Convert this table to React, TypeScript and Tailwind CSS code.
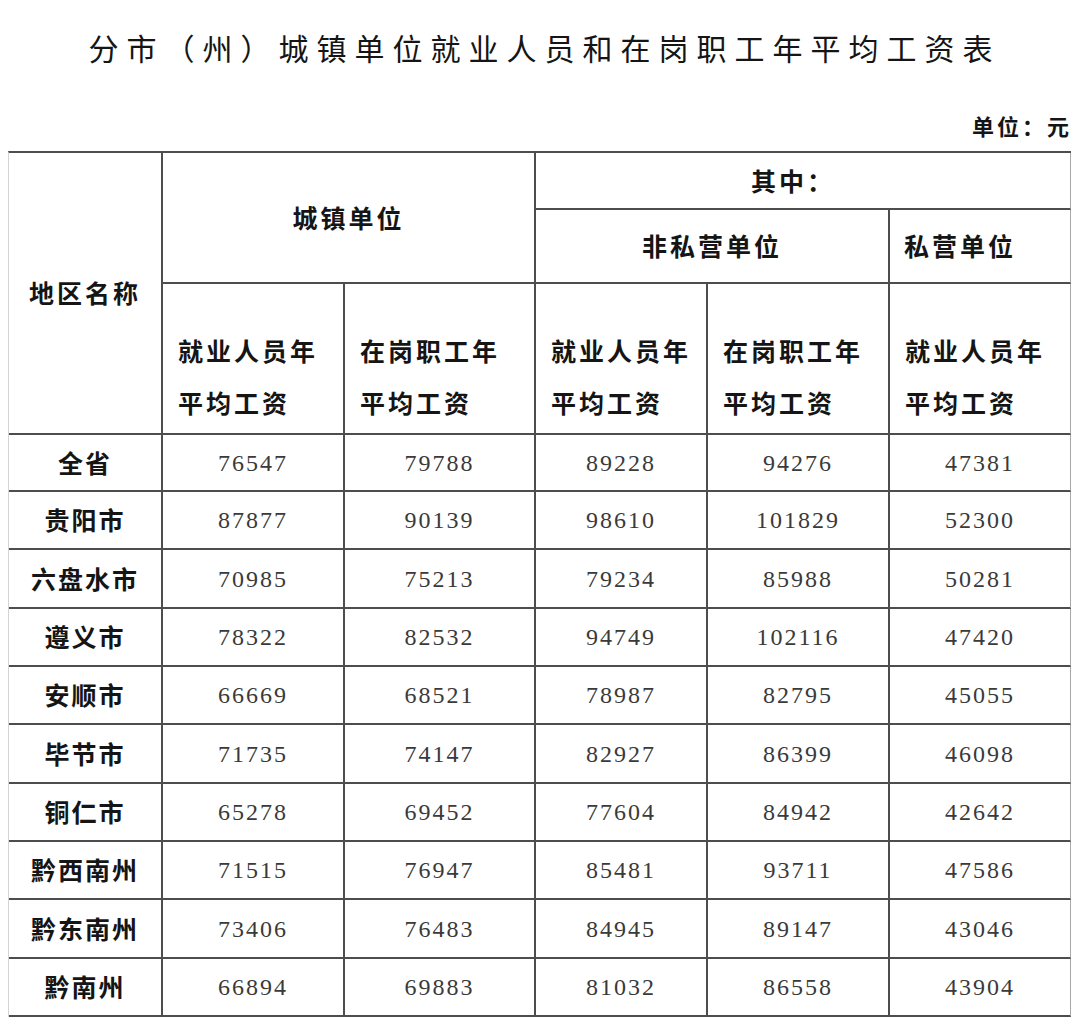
const cjk = "font-['Noto_Sans_CJK_SC','Noto_Sans_CJK_JP',sans-serif]"

const rows: [string, number[]][] = [
  ["全省", [76547, 79788, 89228, 94276, 47381]],
  ["贵阳市", [87877, 90139, 98610, 101829, 52300]],
  ["六盘水市", [70985, 75213, 79234, 85988, 50281]],
  ["遵义市", [78322, 82532, 94749, 102116, 47420]],
  ["安顺市", [66669, 68521, 78987, 82795, 45055]],
  ["毕节市", [71735, 74147, 82927, 86399, 46098]],
  ["铜仁市", [65278, 69452, 77604, 84942, 42642]],
  ["黔西南州", [71515, 76947, 85481, 93711, 47586]],
  ["黔东南州", [73406, 76483, 84945, 89147, 43046]],
  ["黔南州", [66894, 69883, 81032, 86558, 43904]],
]

const subHeads = [
  ["就业人员年", "平均工资"],
  ["在岗职工年", "平均工资"],
  ["就业人员年", "平均工资"],
  ["在岗职工年", "平均工资"],
  ["就业人员年", "平均工资"],
]

// shared cell borders: right + bottom, dark scan lines
const cell = "border-b-2 border-r-2 border-[#4d4d4d]"
const lastCol = "border-b-2 border-[#4d4d4d] border-r border-r-[#a8a8a8]"

export default function App() {
  return (
    <div className={`w-[1079px] h-[1020px] bg-white overflow-hidden text-[#151515] ${cjk}`}>
      {/* Title */}
      <div className="pt-[27px] pl-[10px] text-center text-[30px] leading-[40px] tracking-[8px]">
        分市（州）城镇单位就业人员和在岗职工年平均工资表
      </div>

      {/* Unit */}
      <div className="h-[85px] flex items-end justify-end pr-[7px] pb-[15px]">
        <span className="text-[22px] leading-[24px] font-bold tracking-[3px]">单位：元</span>
      </div>

      {/* Table */}
      <div className="ml-[8px] w-[1063px] grid grid-cols-[154px_182px_191px_172px_182px_181px] grid-rows-[57px_74px_151px_57px_58px_59px_58px_58px_59px_58px_58px_59px_58px] border-t-2 border-t-[#4d4d4d] border-l border-l-[#d4d4d4] -mt-[1px]">
        <div className={`${cell} row-span-3 flex items-center justify-center text-[25px] font-bold tracking-[3px]`}>
          地区名称
        </div>
        <div className={`${cell} col-span-2 row-span-2 flex items-center justify-center text-[25px] font-bold tracking-[3px]`}>
          城镇单位
        </div>
        <div className={`${lastCol} col-span-3 flex items-center justify-center text-[25px] font-bold tracking-[3px] pr-[20px]`}>
          其中：
        </div>
        <div className={`${cell} col-span-2 flex items-center justify-center text-[25px] font-bold tracking-[3px]`}>
          非私营单位
        </div>
        <div className={`${lastCol} flex items-center pl-[14px] text-[25px] font-bold tracking-[3px]`}>
          私营单位
        </div>
        {subHeads.map((h, i) => (
          <div
            key={i}
            className={`${i === 4 ? lastCol : cell} flex flex-col pt-[40px] pl-[15px] text-[25px] leading-[52px] font-bold tracking-[3px]`}
          >
            <span>{h[0]}</span>
            <span>{h[1]}</span>
          </div>
        ))}

        {rows.map(([name, vals]) => (
          <div key={name} className="contents">
            <div className={`${cell} flex items-center justify-center text-[25px] font-bold tracking-[2px]`}>
              {name}
            </div>
            {vals.map((v, j) => (
              <div
                key={j}
                className={`${j === 4 ? lastCol : cell} flex items-center justify-center font-['Liberation_Serif',serif] text-[24px] tracking-[2px] text-[#3a3a3a]`}
              >
                {v}
              </div>
            ))}
          </div>
        ))}
      </div>
    </div>
  )
}
